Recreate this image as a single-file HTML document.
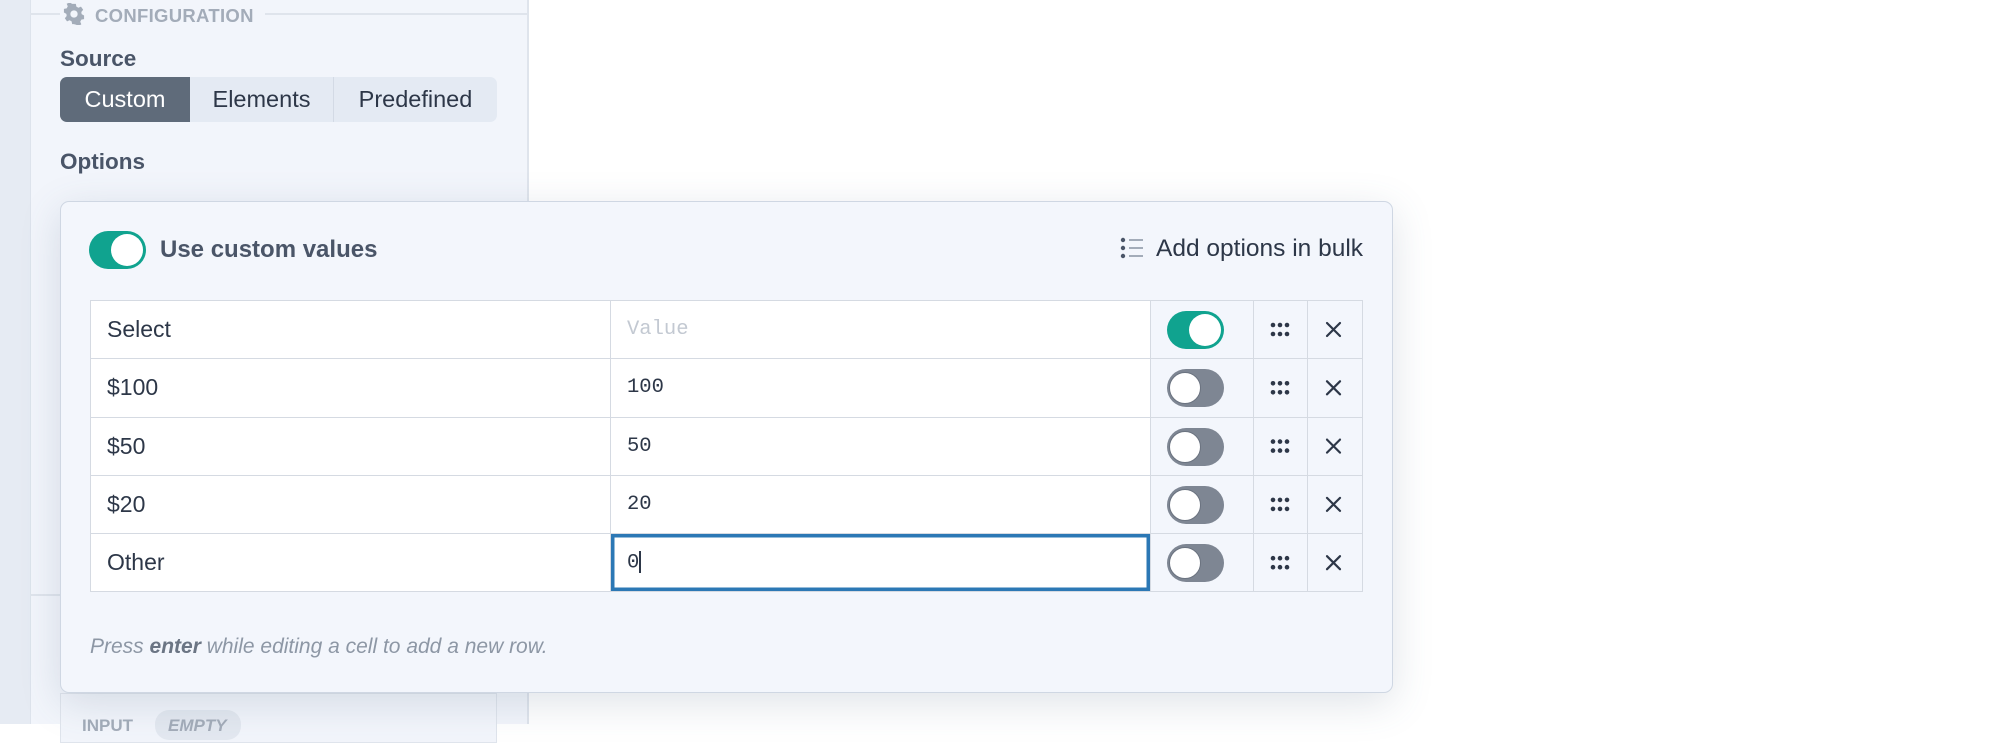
<!DOCTYPE html>
<html><head><meta charset="utf-8"><style>
*{box-sizing:border-box;margin:0;padding:0}
body{width:2000px;height:724px;overflow:hidden;background:#fff;font-family:"Liberation Sans",sans-serif;position:relative;color:#2d3748}
.abs{position:absolute}
.side{left:0;top:0;width:30px;height:724px;background:#e6ebf3}
.panel{left:30px;top:0;width:499px;height:724px;background:#f2f5fb;border-right:2px solid #dfe4ec;border-left:1px solid #dde3ec}
.lbl{font-weight:bold;color:#4a5568;font-size:22.5px}
.seg{left:60px;top:77px;width:437px;height:45px;background:#e4eaf3;border-radius:7px;display:flex;overflow:hidden;font-size:23.5px;color:#2d3748}
.seg div{display:flex;align-items:center;justify-content:center;height:100%}
.modal{left:60px;top:201px;width:1333px;height:492px;background:#f3f6fc;border:1.5px solid #cfd7e3;border-radius:9px;box-shadow:0 10px 40px rgba(80,100,130,.18)}
.tog{width:57px;height:38px;border-radius:19px;position:absolute}
.tog i{position:absolute;top:3px;width:32px;height:32px;border-radius:50%;background:#fff}
.on{background:#10a38f}.on i{right:3px}
.off{background:#7e8693}.off i{left:2px;border:1.5px solid #6b7380}
table{position:absolute;left:90px;top:300px;border-collapse:collapse}
td{border:1.5px solid #d5dae2;height:58.3px;font-size:23px;padding:0 0 0 16px}
td.w{background:#fff}
td.m{font-family:"Liberation Mono",monospace;font-size:20.5px;color:#2d3748}
td.g{background:#f3f6fc;padding:0;position:relative}
</style></head><body>
<div class="abs side"></div>
<div class="abs panel"></div>
<div class="abs" style="left:30px;top:13px;width:30px;height:1.5px;background:#dfe4ec"></div>
<div class="abs" style="left:265px;top:13px;width:263px;height:1.5px;background:#dfe4ec"></div>
<svg class="abs" style="left:63px;top:3px" width="22" height="22" viewBox="0 0 24 24"><path fill="#a3acb9" d="M10 1h4l.6 3 2.2 1.2 2.8-1.2 2.4 3.4-2 2.4.3 2.4 2.7 1.4v4l-3 .6-1.2 2.2 1.2 2.8-3.4 2.4-2.4-2-2.4.3L14 23h-4l-.6-3-2.2-1.2-2.8 1.2L2 16.6l2-2.4-.3-2.4L1 10.4v-4l3-.6 1.2-2.2L4 .8 7.4-.6zM12 8a4 4 0 100 8 4 4 0 000-8z"/></svg>
<div class="abs" style="left:95px;top:5px;font-size:18.5px;font-weight:bold;color:#a3acb9;letter-spacing:.3px">CONFIGURATION</div>
<div class="abs lbl" style="left:60px;top:46px">Source</div>
<div class="abs seg"><div style="width:130px;background:#5f6b7a;color:#fff">Custom</div><div style="width:144px;border-right:1.5px solid #d3dae5">Elements</div><div style="flex:1">Predefined</div></div>
<div class="abs lbl" style="left:60px;top:149px">Options</div>
<div class="abs" style="left:60px;top:693px;width:437px;height:50px;background:#f2f5fb;border:1.5px solid #dfe4ec"></div>
<div class="abs" style="left:82px;top:716px;font-size:17px;font-weight:bold;color:#a3acb9">INPUT</div>
<div class="abs" style="left:155px;top:710px;width:86px;height:30px;border-radius:14px;background:#e3e8f0"></div>
<div class="abs" style="left:168px;top:716px;font-size:17px;font-weight:bold;font-style:italic;color:#a3acb9">EMPTY</div>
<div class="abs" style="left:30px;top:594px;width:30px;height:1.5px;background:#dfe4ec"></div>
<div class="abs modal"></div>
<div class="tog on" style="left:89px;top:231px"><i></i></div>
<div class="abs" style="left:160px;top:236px;font-size:24px;font-weight:bold;color:#4a5568">Use custom values</div>
<svg class="abs" style="left:1120px;top:237px" width="24" height="22" viewBox="0 0 24 22"><g fill="#4a5568"><circle cx="3" cy="3" r="2.2"/><circle cx="3" cy="11" r="2.2"/><circle cx="3" cy="19" r="2.2"/></g><g stroke="#a3acb9" stroke-width="2"><path d="M9 3h14M9 11h14M9 19h14"/></g></svg>
<div class="abs" style="left:1156px;top:235px;font-size:24.5px;color:#2d3748">Add options in bulk</div>
<table>
<tr><td class="w" style="width:520px">Select</td><td class="w m" style="width:540px;color:#c3c9d2">Value</td><td class="g" style="width:103px"><div class="tog on" style="left:16px;top:10px"><i></i></div></td><td class="g" style="width:54px"></td><td class="g" style="width:55px"></td></tr>
<tr><td class="w">$100</td><td class="w m">100</td><td class="g"><div class="tog off" style="left:16px;top:10px"><i></i></div></td><td class="g"></td><td class="g"></td></tr>
<tr><td class="w">$50</td><td class="w m">50</td><td class="g"><div class="tog off" style="left:16px;top:10px"><i></i></div></td><td class="g"></td><td class="g"></td></tr>
<tr><td class="w">$20</td><td class="w m">20</td><td class="g"><div class="tog off" style="left:16px;top:10px"><i></i></div></td><td class="g"></td><td class="g"></td></tr>
<tr><td class="w">Other</td><td class="w m" style="box-shadow:inset 0 0 0 3.5px #2c78b5">0<span style="display:inline-block;width:1.5px;height:22px;background:#2d3748;vertical-align:middle"></span></td><td class="g"><div class="tog off" style="left:16px;top:10px"><i></i></div></td><td class="g"></td><td class="g"></td></tr>
</table>
<svg class="abs" style="left:0;top:0" width="2000" height="724">
<g fill="#2d3748">
<g id="d"><circle cx="1273" cy="325" r="2.3"/><circle cx="1280" cy="325" r="2.3"/><circle cx="1287" cy="325" r="2.3"/><circle cx="1273" cy="334" r="2.3"/><circle cx="1280" cy="334" r="2.3"/><circle cx="1287" cy="334" r="2.3"/></g>
<use href="#d" y="58.3"/><use href="#d" y="116.6"/><use href="#d" y="174.9"/><use href="#d" y="233.2"/>
</g>
<g stroke="#2d3748" stroke-width="2.2" stroke-linecap="round">
<g id="x"><path d="M1327 323l13 13M1340 323l-13 13"/></g>
<use href="#x" y="58.3"/><use href="#x" y="116.6"/><use href="#x" y="174.9"/><use href="#x" y="233.2"/>
</g>
</svg>
<div class="abs" style="left:90px;top:635px;font-size:21px;font-style:italic;color:#8d97a5">Press <b style="color:#6b7584">enter</b> while editing a cell to add a new row.</div>
</body></html>
